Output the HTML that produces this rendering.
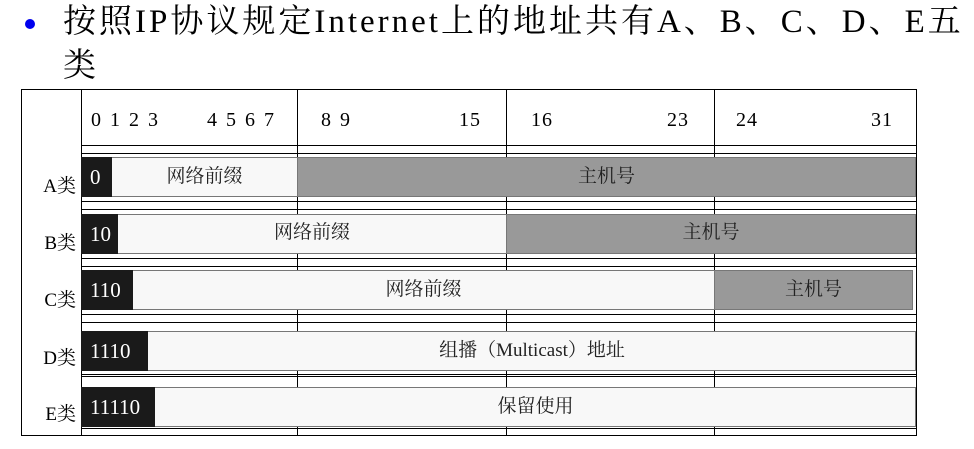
<!DOCTYPE html>
<html><head><meta charset="utf-8"><style>
html,body{margin:0;padding:0;background:#fff;width:974px;height:449px;overflow:hidden;position:relative}
.s{font-family:"Liberation Serif","Noto Serif CJK SC",serif}
.a{position:absolute}
.t{position:absolute;left:63px;top:0px;font-size:33px;letter-spacing:3px;line-height:44px;white-space:nowrap;color:#000}
.h{position:absolute;height:1px;background:#000}
.v{position:absolute;width:1px;background:#000}
.bar{position:absolute;height:38px;border:1px solid #777;background:#f8f8f8;box-sizing:content-box}
.g{background:#999}
.k{position:absolute;background:#1a1a1a;color:#fff;font-size:21px;line-height:40px;height:40px;padding-left:9px;box-sizing:border-box}
.lab{position:absolute;left:22px;width:54px;text-align:right;font-size:19px;color:#000}
.n{position:absolute;top:109px;font-size:20px;color:#000;letter-spacing:2px;white-space:nowrap}
.c{position:absolute;font-size:19px;line-height:40px;text-align:center;color:#222}
</style></head><body class="s">
<div class="a" style="left:25px;top:19px;width:10px;height:10px;border-radius:50%;background:#0000ee"></div>
<div class="t s">按照IP协议规定Internet上的地址共有A、B、C、D、E五<br>类</div>
<div class="a" style="left:21px;top:89px;width:894px;height:345px;border:1px solid #000"></div>
<div class="v" style="left:81px;top:89px;height:346px"></div>
<div class="v" style="left:297px;top:89px;height:346px"></div>
<div class="v" style="left:506px;top:89px;height:346px"></div>
<div class="v" style="left:714px;top:89px;height:346px"></div>
<div class="h" style="left:81px;width:835px;top:145px"></div>
<div class="h" style="left:81px;width:835px;top:153px"></div>
<div class="h" style="left:81px;width:835px;top:201px"></div>
<div class="h" style="left:81px;width:835px;top:209px"></div>
<div class="h" style="left:81px;width:835px;top:258px"></div>
<div class="h" style="left:81px;width:835px;top:266px"></div>
<div class="h" style="left:81px;width:835px;top:314px"></div>
<div class="h" style="left:81px;width:835px;top:322px"></div>
<div class="h" style="left:81px;width:835px;top:374px"></div>
<div class="h" style="left:81px;width:835px;top:376px"></div>
<div class="h" style="left:81px;width:835px;top:428px"></div>
<div class="n" style="left:91px">0 1 2 3</div>
<div class="n" style="left:207px">4 5 6 7</div>
<div class="n" style="left:321px">8 9</div>
<div class="n" style="left:459px;letter-spacing:1px">15</div>
<div class="n" style="left:531px;letter-spacing:1px">16</div>
<div class="n" style="left:667px;letter-spacing:1px">23</div>
<div class="n" style="left:736px;letter-spacing:1px">24</div>
<div class="n" style="left:871px;letter-spacing:1px">31</div>
<div class="bar" style="left:81px;top:157px;width:215px"></div>
<div class="bar g" style="left:297px;top:157px;width:617px"></div>
<div class="k" style="left:81px;top:157px;width:31px">0</div>
<div class="c" style="left:112px;top:157px;width:185px">网络前缀</div>
<div class="c" style="left:297px;top:157px;width:619px">主机号</div>
<div class="lab" style="top:171px">A类</div>
<div class="bar" style="left:81px;top:214px;width:424px"></div>
<div class="bar g" style="left:506px;top:214px;width:408px"></div>
<div class="k" style="left:81px;top:214px;width:37px">10</div>
<div class="c" style="left:118px;top:213px;width:388px">网络前缀</div>
<div class="c" style="left:506px;top:213px;width:410px">主机号</div>
<div class="lab" style="top:228px">B类</div>
<div class="bar" style="left:81px;top:270px;width:632px"></div>
<div class="bar g" style="left:714px;top:270px;width:197px"></div>
<div class="k" style="left:81px;top:270px;width:52px">110</div>
<div class="c" style="left:133px;top:270px;width:581px">网络前缀</div>
<div class="c" style="left:714px;top:270px;width:199px">主机号</div>
<div class="lab" style="top:285px">C类</div>
<div class="bar" style="left:81px;top:331px;width:833px"></div>
<div class="k" style="left:81px;top:331px;width:67px">1110</div>
<div class="c" style="left:148px;top:331px;width:768px">组播（Multicast）地址</div>
<div class="lab" style="top:343px">D类</div>
<div class="bar" style="left:81px;top:387px;width:833px"></div>
<div class="k" style="left:81px;top:387px;width:74px">11110</div>
<div class="c" style="left:155px;top:387px;width:761px">保留使用</div>
<div class="lab" style="top:399px">E类</div>
</body></html>
